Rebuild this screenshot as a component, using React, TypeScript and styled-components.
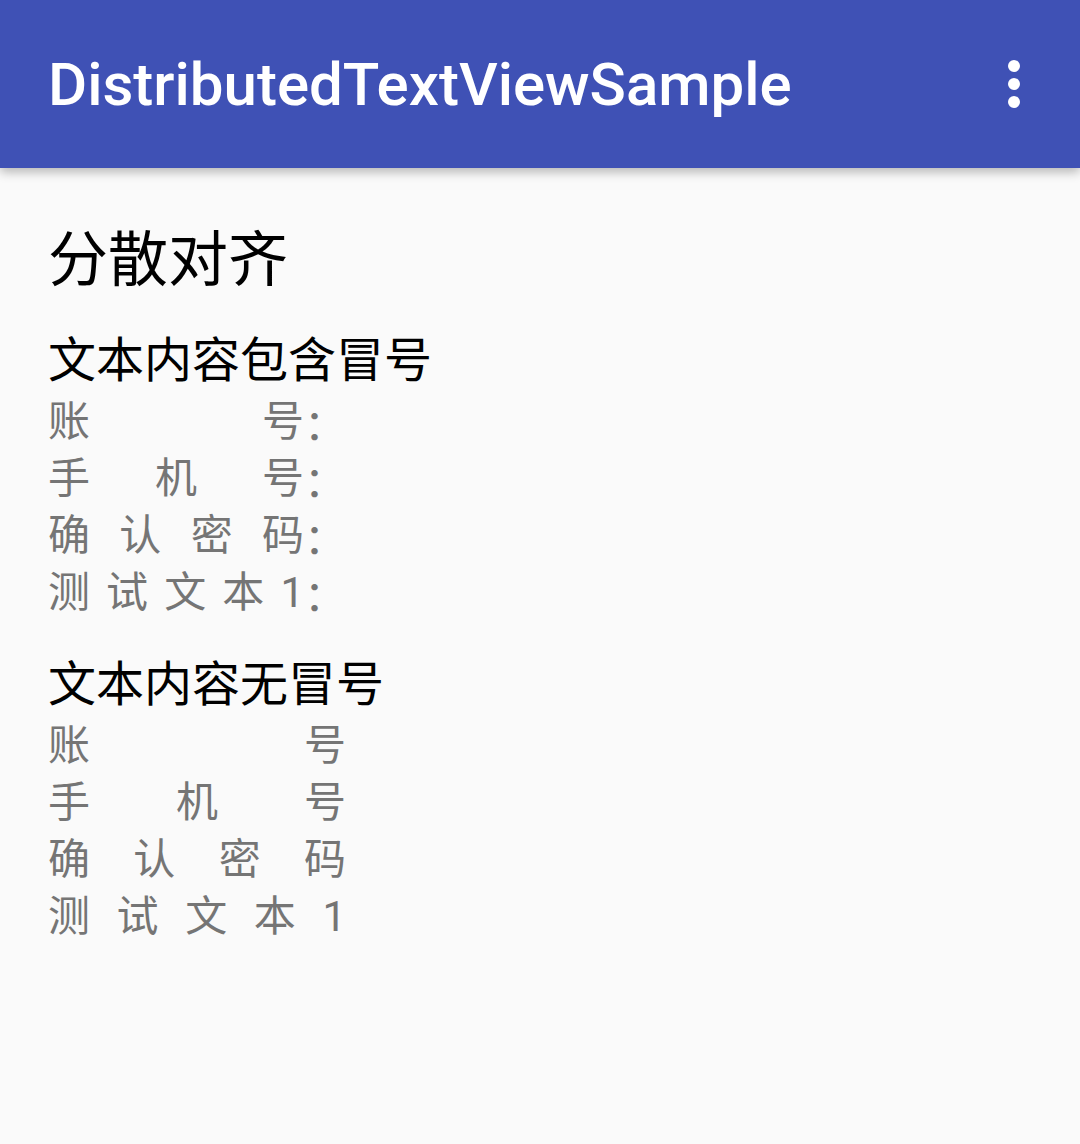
import React from "react";
import styled, { createGlobalStyle } from "styled-components";

const GlobalStyle = createGlobalStyle`
  html, body {
    margin: 0;
    padding: 0;
    background: #fafafa;
  }
  body {
    font-family: Roboto, "Noto Sans CJK SC", sans-serif;
  }
`;

const Screen = styled.div`
  width: 1080px;
  height: 1144px;
  background: #fafafa;
  display: flex;
  flex-direction: column;
  overflow: hidden;
`;

const AppBar = styled.header`
  height: 168px;
  flex: 0 0 168px;
  background: #3f51b5;
  display: flex;
  align-items: center;
  justify-content: space-between;
  padding: 0 30px 0 48px;
  box-sizing: border-box;
  box-shadow: 0 4px 10px rgba(0, 0, 0, 0.28);
  position: relative;
  z-index: 1;
`;

const Title = styled.h1`
  margin: 0;
  color: #ffffff;
  font-family: Roboto, sans-serif;
  font-weight: 500;
  font-size: 60px;
  letter-spacing: 0;
`;

const MenuButton = styled.div`
  width: 72px;
  height: 72px;
  display: flex;
  align-items: center;
  justify-content: center;
`;

const Content = styled.main`
  padding: 0 48px;
  display: flex;
  flex-direction: column;
`;

const PageHeading = styled.h2`
  margin: 48px 0 0;
  font-family: Roboto, "Noto Sans CJK SC", sans-serif;
  font-weight: 400;
  font-size: 60px;
  line-height: 90px;
  color: #000;
`;

const SectionTitle = styled.h3<{ $top: number }>`
  margin: ${(p) => p.$top}px 0 0;
  font-family: Roboto, "Noto Sans CJK SC", sans-serif;
  font-weight: 400;
  font-size: 48px;
  line-height: 64px;
  color: #000;
`;

const Row = styled.div<{ $width: number }>`
  width: ${(p) => p.$width}px;
  display: flex;
  font-family: Roboto, "Noto Sans CJK SC", sans-serif;
  font-size: 42px;
  line-height: 57px;
  color: #757575;
`;

const Spread = styled.div`
  flex: 1;
  display: flex;
  justify-content: space-between;
`;

const Colon = styled.span`
  width: 42px;
  font-family: "Noto Sans CJK SC", sans-serif;
`;

const MoreIcon = () => (
  <svg width="72" height="72" viewBox="0 0 24 24">
    <circle cx="12" cy="6" r="2" fill="#fff" />
    <circle cx="12" cy="12" r="2" fill="#fff" />
    <circle cx="12" cy="18" r="2" fill="#fff" />
  </svg>
);

const labels = [["账", "号"], ["手", "机", "号"], ["确", "认", "密", "码"], ["测", "试", "文", "本", "1"]];

const DistributedRow = ({ chars, colon }: { chars: string[]; colon: boolean }) => (
  <Row $width={298}>
    <Spread>
      {chars.map((c, i) => (
        <span key={i}>{c}</span>
      ))}
    </Spread>
    {colon && <Colon>：</Colon>}
  </Row>
);

export default function App() {
  return (
    <Screen>
      <GlobalStyle />
      <AppBar>
        <Title>DistributedTextViewSample</Title>
        <MenuButton>
          <MoreIcon />
        </MenuButton>
      </AppBar>
      <Content>
        <PageHeading>分散对齐</PageHeading>
        <SectionTitle $top={23}>文本内容包含冒号</SectionTitle>
        {labels.map((l, i) => (
          <DistributedRow key={i} chars={l} colon />
        ))}
        <SectionTitle $top={32}>文本内容无冒号</SectionTitle>
        {labels.map((l, i) => (
          <DistributedRow key={i} chars={l} colon={false} />
        ))}
      </Content>
    </Screen>
  );
}
